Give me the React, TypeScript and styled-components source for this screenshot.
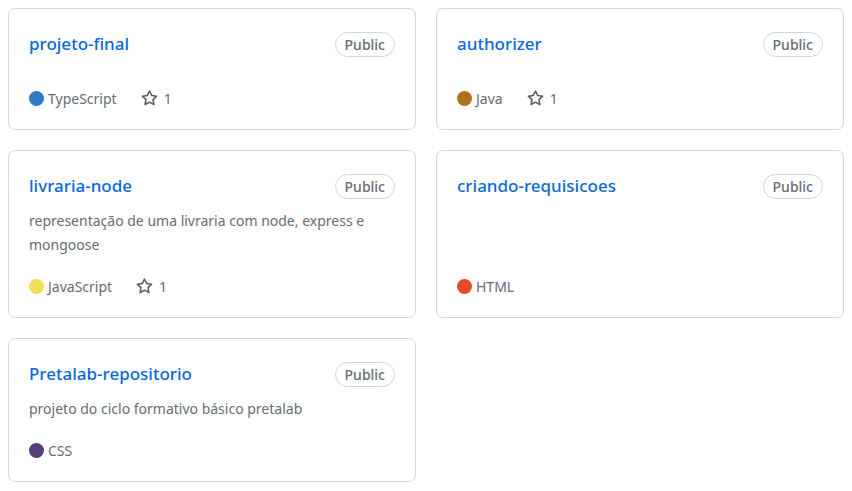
import React from "react";
import styled, { createGlobalStyle } from "styled-components";

const GlobalStyle = createGlobalStyle`
  html, body { margin: 0; padding: 0; background: #ffffff; }
  body { font-family: "Noto Sans", "Open Sans", sans-serif; }
`;

const Grid = styled.div`
  display: grid;
  grid-template-columns: 1fr 1fr;
  gap: 20px;
  padding: 8px;
`;

const Card = styled.div`
  display: flex;
  flex-direction: column;
  min-height: 80px;
  padding: 20px;
  border: 1px solid #d0d7de;
  border-radius: 7px;
  background: #fff;
`;

const TitleRow = styled.div`
  display: flex;
  align-items: center;
  justify-content: space-between;
  height: 29px;
  margin-top: 1px;
`;

const Title = styled.a`
  color: #0969da;
  font-size: 17px;
  font-weight: 550;
  line-height: 22px;
  margin-top: -2px;
  text-decoration: none;
`;

const Badge = styled.span`
  display: inline-flex;
  align-items: center;
  height: 23px;
  padding: 0 9px;
  border: 1px solid #d0d7de;
  border-radius: 13px;
  color: #656d76;
  font-size: 14px;
  font-weight: 550;
`;

const Desc = styled.p`
  margin: 8px 0 0;
  color: #656d76;
  font-size: 14px;
  line-height: 24px;
`;

const Footer = styled.div`
  display: flex;
  align-items: center;
  margin-top: auto;
  padding-top: 18px;
  height: 22px;
  color: #656d76;
  font-size: 14px;
`;

const Lang = styled.span`
  display: inline-flex;
  align-items: center;
  gap: 4px;
  margin-right: 24px;
`;

const Dot = styled.span<{ $color: string }>`
  width: 15px;
  height: 15px;
  border-radius: 50%;
  background: ${(p) => p.$color};
`;

const Stars = styled.span`
  display: inline-flex;
  align-items: center;
  gap: 6px;
`;

const StarIcon = () => (
  <svg width="17" height="17" viewBox="0 0 16 16" fill="#57606a">
    <path d="M8 .25a.75.75 0 0 1 .673.418l1.882 3.815 4.21.612a.75.75 0 0 1 .416 1.279l-3.046 2.97.719 4.192a.751.751 0 0 1-1.088.791L8 12.347l-3.766 1.98a.75.75 0 0 1-1.088-.79l.72-4.194L.818 6.374a.75.75 0 0 1 .416-1.28l4.21-.611L7.327.668A.75.75 0 0 1 8 .25Zm0 2.445L6.615 5.5a.75.75 0 0 1-.564.41l-3.097.45 2.24 2.184a.75.75 0 0 1 .216.664l-.528 3.084 2.769-1.456a.75.75 0 0 1 .698 0l2.77 1.456-.53-3.084a.75.75 0 0 1 .216-.664l2.24-2.183-3.096-.45a.75.75 0 0 1-.564-.41L8 2.694Z" />
  </svg>
);

type Repo = {
  name: string;
  desc?: string;
  lang: string;
  color: string;
  stars?: number;
};

const repos: Repo[] = [
  { name: "projeto-final", lang: "TypeScript", color: "#3178c6", stars: 1 },
  { name: "authorizer", lang: "Java", color: "#b07219", stars: 1 },
  {
    name: "livraria-node",
    desc: "representação de uma livraria com node, express e mongoose",
    lang: "JavaScript",
    color: "#f1e05a",
    stars: 1,
  },
  { name: "criando-requisicoes", lang: "HTML", color: "#e34c26" },
  {
    name: "Pretalab-repositorio",
    desc: "projeto do ciclo formativo básico pretalab",
    lang: "CSS",
    color: "#563d7c",
  },
];

export default function App() {
  return (
    <>
      <GlobalStyle />
      <Grid>
        {repos.map((r) => (
          <Card key={r.name}>
            <TitleRow>
              <Title href="#">{r.name}</Title>
              <Badge>Public</Badge>
            </TitleRow>
            {r.desc && <Desc>{r.desc}</Desc>}
            <Footer>
              <Lang>
                <Dot $color={r.color} />
                {r.lang}
              </Lang>
              {r.stars !== undefined && (
                <Stars>
                  <StarIcon />
                  {r.stars}
                </Stars>
              )}
            </Footer>
          </Card>
        ))}
      </Grid>
    </>
  );
}
